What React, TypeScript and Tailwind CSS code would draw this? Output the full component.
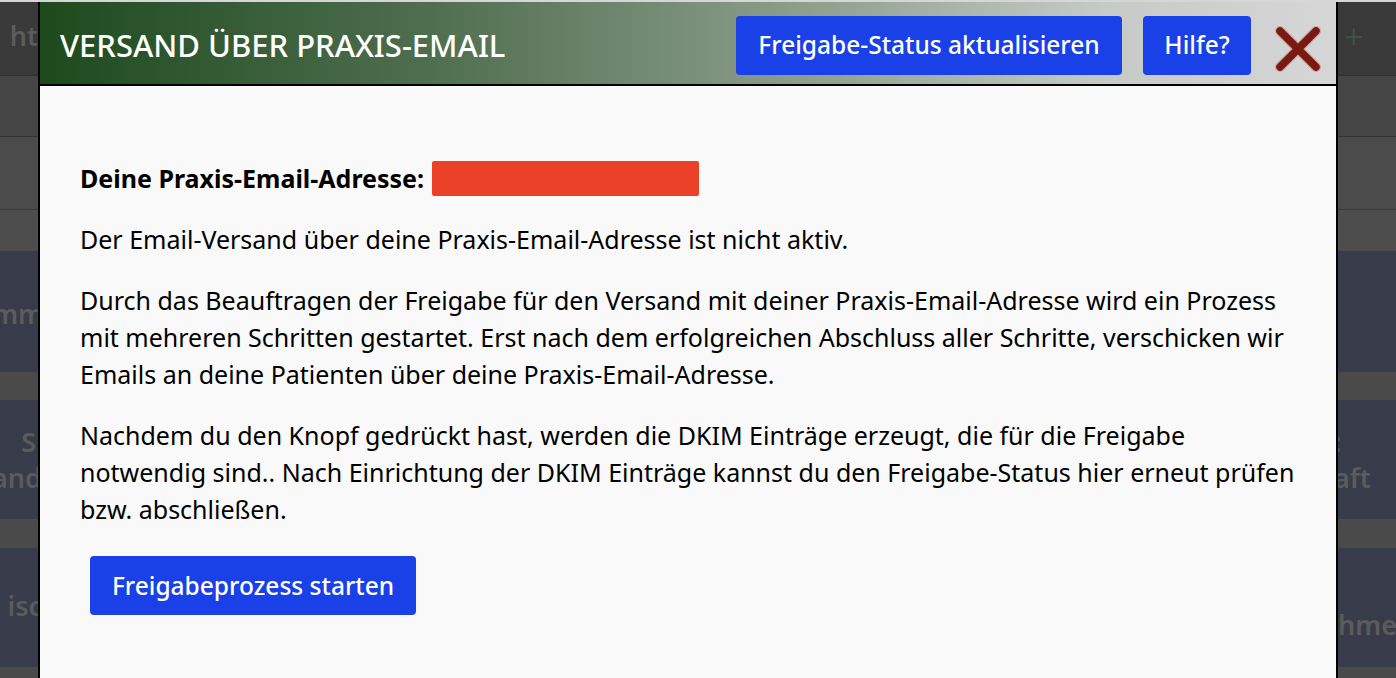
import { ReactNode } from "react";

const font = { fontFamily: '"Noto Sans", "Open Sans", sans-serif' };

function BgRow({
  className,
  left,
  right,
}: {
  className: string;
  left?: ReactNode;
  right?: ReactNode;
}) {
  return (
    <div className={`flex justify-between ${className}`}>
      <div className="flex w-[38px] flex-col items-end justify-center whitespace-nowrap">
        {left}
      </div>
      <div className="flex w-[58px] flex-col items-start justify-center whitespace-nowrap">
        {right}
      </div>
    </div>
  );
}

function CloseIcon() {
  return (
    <svg width="48" height="48" viewBox="0 0 48 48">
      <g strokeLinecap="round">
        <path d="M6 6 L42 42 M42 6 L6 42" stroke="#c9a5a2" strokeWidth="10" />
        <path d="M6 6 L42 42 M42 6 L6 42" stroke="#7a1912" strokeWidth="7.5" />
      </g>
    </svg>
  );
}

export default function App() {
  return (
    <div className="relative h-[678px] w-[1396px] overflow-hidden bg-[#4a4a4a]" style={font}>
      {/* dimmed page behind the dialog */}
      <div className="flex flex-col text-[27px] font-semibold text-[#5b5b5b]">
        <div className="h-[2px] bg-[#d6d6d6]" />
        <BgRow
          className="h-[74px] border-b border-[#2f2f2f] bg-[#393939]"
          left={<span className="pb-1">ht</span>}
          right={<span className="pl-[6px] pb-1 text-[34px] font-light text-[#3f573f]">+</span>}
        />
        <BgRow className="h-[61px] border-b border-[#333] bg-[#454545]" />
        <BgRow className="h-[73px] border-b border-[#3a3a3a] bg-[#4b4b4b]" />
        <BgRow className="h-[41px] bg-[#4d4d4d]" />
        <BgRow className="h-[121px] bg-[#383c4a]" left={<span className="-mr-[6px] pt-[6px]">mm</span>} />
        <BgRow className="h-[28px] bg-[#4a4a4a]" />
        <BgRow
          className="h-[119px] bg-[#383c4a]"
          left={
            <div className="-mr-[4px] flex flex-col items-end leading-[36px]">
              <span className="pr-[6px]">S</span>
              <span>sand</span>
            </div>
          }
          right={
            <div className="-ml-[4px] flex flex-col leading-[36px]">
              <span>:</span>
              <span>aft</span>
            </div>
          }
        />
        <BgRow className="h-[29px] bg-[#4a4a4a]" />
        <BgRow
          className="h-[119px] bg-[#383c4a]"
          left={<span className="-mr-[4px] pb-[2px]">isc</span>}
          right={<span className="pt-[36px]">hme</span>}
        />
        <BgRow className="h-[9px] bg-[#4a4a4a]" />
      </div>

      {/* dialog */}
      <div className="absolute left-[38px] top-[2px] bottom-0 w-[1300px] border-x-2 border-black bg-[#f9f9f9]">
        <div className="flex h-[84px] items-center border-b-2 border-black bg-[linear-gradient(90deg,#1d4a1d_0%,#4f6e4f_30%,#8fa08f_60%,#c6cac6_82%,#d6d6d6_100%)] pl-[20px] pr-[14px] pt-[4px]">
          <h1 className="text-[31px] font-medium text-white">VERSAND ÜBER PRAXIS-EMAIL</h1>
          <div className="ml-auto flex items-center gap-[21px]">
            <button className="h-[59px] w-[386px] rounded-[4px] bg-[#1a40e8] text-[24.5px] font-medium text-white">
              Freigabe-Status aktualisieren
            </button>
            <button className="h-[59px] w-[108px] rounded-[4px] bg-[#1a40e8] text-[24.5px] font-medium text-white">
              Hilfe?
            </button>
            <div className="ml-[2px] mt-[8px] flex h-[59px] w-[48px] items-center justify-center">
              <CloseIcon />
            </div>
          </div>
        </div>

        <div className="flex flex-col gap-[24px] pl-[40px] pr-[40px] pt-[74px] text-[25px] leading-[37px] text-black">
          <p className="flex items-center">
            <span className="font-bold">Deine Praxis-Email-Adresse:</span>
            <span className="ml-[8px] inline-block h-[35px] w-[267px] rounded-[2px] bg-[#ea4128]" />
          </p>
          <p>Der Email-Versand über deine Praxis-Email-Adresse ist nicht aktiv.</p>
          <p>
            Durch das Beauftragen der Freigabe für den Versand mit deiner Praxis-Email-Adresse wird ein Prozess
            mit mehreren Schritten gestartet. Erst nach dem erfolgreichen Abschluss aller Schritte, verschicken wir
            Emails an deine Patienten über deine Praxis-Email-Adresse.
          </p>
          <p>
            Nachdem du den Knopf gedrückt hast, werden die DKIM Einträge erzeugt, die für die Freigabe
            notwendig sind.. Nach Einrichtung der DKIM Einträge kannst du den Freigabe-Status hier erneut prüfen
            bzw. abschließen.
          </p>
          <div className="pl-[10px] pt-[4px]">
            <button className="h-[59px] w-[326px] rounded-[4px] bg-[#1a40e8] text-[24.5px] font-medium text-white">
              Freigabeprozess starten
            </button>
          </div>
        </div>
      </div>
    </div>
  );
}
